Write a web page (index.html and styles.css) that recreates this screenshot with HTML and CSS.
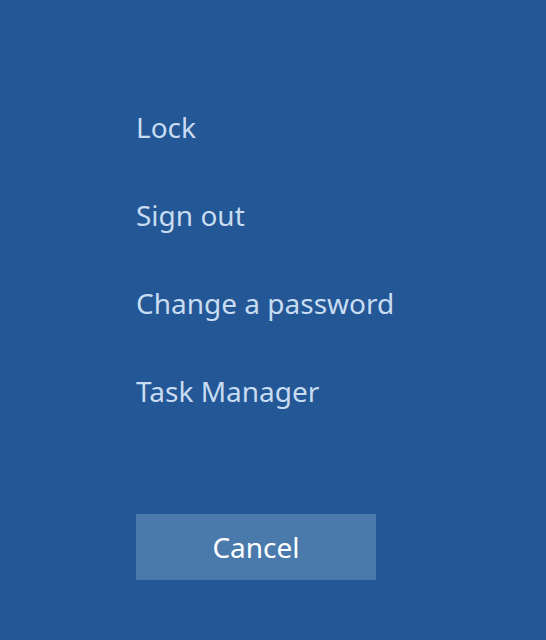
FILE: index.html
```html
<!DOCTYPE html>
<html>
<head>
  <meta name="viewport" content="width=device-width, initial-scale=1">
  <link rel="stylesheet" href="styles.css">
  <title>Security options</title>
</head>
<body>

<div class="screen">
  <ul class="options">
    <li class="option">Lock</li>
    <li class="option">Sign out</li>
    <li class="option">Change a password</li>
    <li class="option">Task Manager</li>
  </ul>
  <button class="cancelBtn">Cancel</button>
</div>

</body>
</html>
```

FILE: styles.css
```css
html, body {
  margin: 0;
  height: 100%;
}

body {
  background-color: #245795;
}

.screen {
  font-family: 'Noto Sans', sans-serif;
  display: flex;
  flex-direction: column;
  align-items: flex-start;
  padding: 83px 0 0 136px;
}

.options {
  list-style: none;
  margin: 0;
  padding: 0;
}

.option {
  font-size: 28px;
  line-height: 88px;
  color: #c8dcf2;
  cursor: pointer;
}

.cancelBtn {
  margin-top: 79px;
  width: 240px;
  height: 66px;
  border: 0;
  border-radius: 0;
  background-color: #4a7aab;
  color: #ffffff;
  font-family: 'Noto Sans', sans-serif;
  font-size: 28px;
  padding: 0;
}
```
